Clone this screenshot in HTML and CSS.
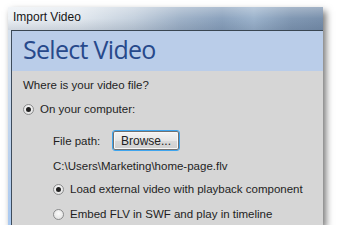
FILE: index.html
```html
<!DOCTYPE html>
<html lang="en">
<head>
  <meta charset="UTF-8">
  <title>Import Video</title>
  <link rel="stylesheet" href="styles.css">
</head>
<body>
  <div class="window">
    <div class="titlebar">Import Video</div>
    <div class="frame">
      <div class="client">
        <div class="banner">Select Video</div>
        <div class="content">
          <div class="row question">Where is your video file?</div>
          <div class="row first-choice">
            <span class="radio checked"></span>
            <span>On your computer:</span>
          </div>
          <div class="row path-row">
            <span class="label">File path:</span>
            <button class="browse">Browse...</button>
          </div>
          <div class="row indent file">C:\Users\Marketing\home-page.flv</div>
          <div class="row indent option-a">
            <span class="radio checked"></span>
            <span>Load external video with playback component</span>
          </div>
          <div class="row indent option-b">
            <span class="radio"></span>
            <span>Embed FLV in SWF and play in timeline</span>
          </div>
        </div>
      </div>
    </div>
  </div>
</body>
</html>
```

FILE: styles.css
```css
body {
  margin: 0;
  background-color: #fff;
  font-family: "Liberation Sans", Arial, sans-serif;
  font-size: 11.5px;
  color: #1e1e1e;
}
.window {
  margin: 7px 0 0 8px;
  width: 315px;
  height: 218px;
  display: flex;
  flex-direction: column;
  overflow: hidden;
  box-shadow: 3px 4px 7px rgba(0,0,0,0.55);
}
.titlebar {
  height: 23px;
  flex: none;
  padding-left: 5px;
  line-height: 20px;
  font-size: 12px;
  color: #151515;
  background:
    linear-gradient(to bottom, rgba(255,255,255,0.3), rgba(255,255,255,0) 50%, rgba(40,60,90,0.15)),
    linear-gradient(to right, #eef2f6 0%, #e3e9ef 22%, #c5d1de 40%, #9fb2c8 55%, #8ba2bd 68%, #9cb3cc 78%, #8198b3 90%, #7990ac 100%);
}
.frame {
  flex: 1;
  display: flex;
  padding-left: 3px;
  background: linear-gradient(to bottom, #d7e2ee, #b8d0ee 70%, #a9c9f1);
}
.client {
  flex: 1;
  display: flex;
  flex-direction: column;
  border-left: 1px solid #3e4c5c;
  border-top: 1px solid #3a4652;
  background-color: #d6d6d6;
}
.banner {
  height: 40px;
  flex: none;
  padding-left: 11px;
  line-height: 36px;
  background-color: #bacde9;
  font-family: "Open Sans", sans-serif;
  font-size: 25px;
  letter-spacing: -0.7px;
  color: #27498b;
}
.content {
  padding-left: 11px;
}
.row {
  height: 14px;
  display: flex;
  align-items: center;
  gap: 6px;
}
.question { margin-top: 7px; }
.first-choice { margin-top: 10px; }
.path-row {
  height: 19px;
  margin-top: 15px;
  padding-left: 30px;
  gap: 0;
}
.label { width: 60px; }
.indent { padding-left: 30px; }
.file { margin-top: 9px; }
.option-a { margin-top: 9px; }
.option-b { margin-top: 11px; }
.radio {
  width: 11px;
  height: 11px;
  flex: none;
  box-sizing: border-box;
  border: 1px solid #8b8c8d;
  border-radius: 50%;
  background: radial-gradient(circle at 50% 40%, #fbfbfb, #dcdcdc);
  display: flex;
  align-items: center;
  justify-content: center;
}
.radio.checked::after {
  content: "";
  width: 5px;
  height: 5px;
  border-radius: 50%;
  background-color: #202020;
}
.browse {
  width: 66px;
  height: 19px;
  padding: 0;
  font-family: inherit;
  font-size: 12px;
  color: #222;
  border: 1px solid #707070;
  border-radius: 2px;
  outline: 1px solid #3fa5ee;
  background: linear-gradient(to bottom, #f3f3f3, #e6e6e6 50%, #dadada 51%, #cfcfcf);
  box-shadow: inset 0 0 0 1px #f8f8f8;
}
```
